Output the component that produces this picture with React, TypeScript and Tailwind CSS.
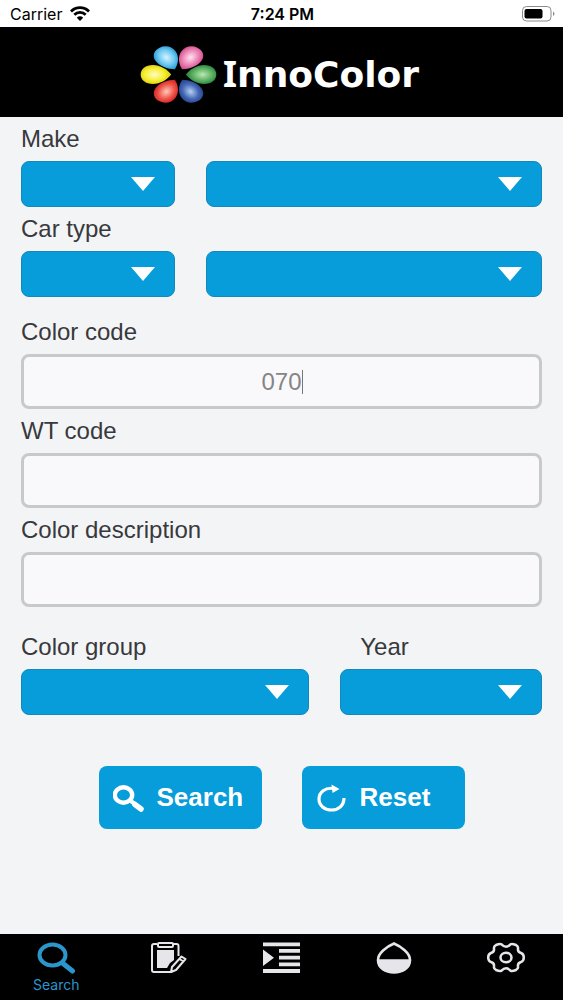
import { useState } from "react";

type SelectProps = {
  id: string;
  label?: string;
};

const petals = [
  { id: "yellow", angle: 0, light: "#fffbc4", mid: "#f6ef35", dark: "#d8c800" },
  { id: "cyan", angle: 60, light: "#d4f3ff", mid: "#6cc8f0", dark: "#1590cc" },
  { id: "pink", angle: 120, light: "#ffe3f1", mid: "#ec83b4", dark: "#c93f83" },
  { id: "green", angle: 180, light: "#b9e8b4", mid: "#5fb062", dark: "#157a37" },
  { id: "blue", angle: 240, light: "#b5d0f5", mid: "#4668b4", dark: "#1b3a86" },
  { id: "red", angle: 300, light: "#ffc9b8", mid: "#ee5348", dark: "#c8161d" },
];

const Flower = () => (
  <svg className="h-[60px] w-[78px]" viewBox="0 0 78 60" aria-hidden="true">
    <defs>
      {petals.map(({ id, light, mid, dark }) => (
        <radialGradient key={id} id={id} cx="0.45" cy="0.5" r="0.58">
          <stop offset="0" stopColor={light} />
          <stop offset="0.55" stopColor={mid} />
          <stop offset="1" stopColor={dark} />
        </radialGradient>
      ))}
    </defs>
    <g transform="translate(38.5 30.5) scale(1.22 1)">
      {petals.map(({ id, angle }) => (
        <path
          key={id}
          transform={`rotate(${angle})`}
          fill={`url(#${id})`}
          d="M-6 0C-9 -5 -15 -9.5 -21 -9.5C-27 -9.5 -31 -5.5 -31 0C-31 5.5 -27 9.5 -21 9.5C-15 9.5 -9 5 -6 0Z"
        />
      ))}
    </g>
  </svg>
);

const Select = ({ id, label }: SelectProps) => (
  <div className="relative">
    <select
      id={id}
      aria-label={label}
      className="block h-[46px] w-full appearance-none rounded-lg border border-[#1488bd] bg-[#079cda] pr-12 pl-4 text-2xl text-white"
    >
      <option value="" />
    </select>
    <svg
      className="pointer-events-none absolute top-4 right-5 h-[14px] w-6"
      viewBox="0 0 24 14"
      aria-hidden="true"
    >
      <path d="M0 0H24L12 14Z" fill="#fff" />
    </svg>
  </div>
);

const labelClass = "mb-2 block text-2xl leading-7";
const inputClass =
  "peer block h-[55px] w-full rounded-lg border-3 border-[#c8c9cb] bg-[#f9f9fb] text-center text-2xl text-[#858587] outline-none";
const buttonClass =
  "flex h-[63px] w-[163px] items-center gap-3 rounded-lg bg-[#079cda] pl-[14px]";

const StatusBar = () => (
  <div className="grid h-[27px] grid-cols-3 items-center bg-white pr-2 pl-[10px] font-['Inter',sans-serif] text-base text-black">
    <div className="flex items-center gap-2">
      <span>Carrier</span>
      <svg className="h-[15px] w-5" viewBox="0 0 20 15" aria-hidden="true">
        <g fill="none" stroke="#000" strokeWidth="2.8">
          <path d="M1 5.4C6 0.4 14 0.4 19 5.4" />
          <path d="M4.3 8.8C7.6 5.6 12.4 5.6 15.7 8.8" />
        </g>
        <path d="M10 15L6.8 11.7C8.6 9.9 11.4 9.9 13.2 11.7Z" />
      </svg>
    </div>
    <span className="text-center font-semibold">7:24 PM</span>
    <svg
      className="h-4 w-[33px] justify-self-end"
      viewBox="0 0 33 16"
      aria-hidden="true"
    >
      <rect x="0.5" y="0.5" width="28.5" height="14.5" rx="4" fill="none" stroke="#8b8b8b" />
      <rect x="2.5" y="3" width="18" height="9.5" rx="2" />
      <path d="M31 5.5C33 6.5 33 9 31 10Z" fill="#8b8b8b" />
    </svg>
  </div>
);

const tabs = [
  {
    name: "Search",
    icon: (
      <g fill="none" stroke="currentColor">
        <ellipse cx="15.5" cy="13" rx="13" ry="10.5" strokeWidth="4" />
        <path d="M26 21.5L35.5 29" strokeWidth="5" strokeLinecap="round" />
      </g>
    ),
  },
  {
    name: "Formulas",
    icon: (
      <g fill="none" stroke="currentColor" strokeWidth="2" strokeLinejoin="round">
        <path d="M8 2H5Q3 2 3 4V28Q3 30 5 30H22L23 29M29.5 14V4Q29.5 2 27.5 2H24" />
        <path d="M10 1H23Q24 1 24 2V4Q24 5 23 5H10Q9 5 9 4V2Q9 1 10 1Z" />
        <path
          d="M8 8H25V18L21 21L18 26H8Z"
          fill="currentColor"
          stroke="none"
        />
        <path d="M22 30L23 25L32.5 14.5L36.5 17L27 28ZM30.5 17L34.5 19.5" />
      </g>
    ),
  },
  {
    name: "List",
    icon: (
      <path
        fill="currentColor"
        d="M1 0.5H38V4.3H1ZM17 7H38V10.8H17ZM17 13.7H38V17.5H17ZM17 20.4H38V24.2H17ZM1 27H38V31H1ZM1 7.5L12 15.7L1 24Z"
      />
    ),
  },
  {
    name: "Tint",
    icon: (
      <g>
        <path
          d="M19 1.5C12 4.5 3 11 3 18C3 26 10.5 30.5 19 30.5C27.5 30.5 35 26 35 18C35 11 26 4.5 19 1.5Z"
          fill="none"
          stroke="currentColor"
          strokeWidth="2.6"
        />
        <path
          d="M3 17.3H35C35 26 27.5 30.5 19 30.5C10.5 30.5 3 26 3 17.3Z"
          fill="currentColor"
        />
      </g>
    ),
  },
  {
    name: "Settings",
    icon: (
      <g fill="none" stroke="currentColor" strokeWidth="2.5" strokeLinejoin="round">
        <path d="M14.5 2.3Q19 7 23.5 2.3Q25 1.3 29 3Q31.5 4.5 31 6.5Q30.5 10 34 11Q36.8 12 36.8 15.5Q36.8 19 34 20Q30.5 21 31 24.5Q31.5 26.5 29 28Q25 29.7 23.5 28.7Q19 24 14.5 28.7Q13 29.7 9 28Q6.5 26.5 7 24.5Q7.5 21 4 20Q1.2 19 1.2 15.5Q1.2 12 4 11Q7.5 10 7 6.5Q6.5 4.5 9 3Q13 1.3 14.5 2.3Z" />
        <ellipse cx="19" cy="15.5" rx="5.5" ry="4.8" />
      </g>
    ),
  },
];

const App = () => {
  const [colorCode, setColorCode] = useState<string>("070");
  const [activeTab, setActiveTab] = useState<string>("Search");

  return (
    <div className="flex min-h-screen flex-col bg-[#f3f4f6] font-['Liberation_Sans',Arial,sans-serif] text-[#38393c]">
      <StatusBar />
      <header className="flex h-[90px] items-center justify-center gap-[5px] bg-black pt-[3px] pr-1">
        <Flower />
        <h1 className="pt-[2px] font-['DejaVu_Sans',sans-serif] text-4xl leading-none font-bold text-white">
          <span className="font-['Noto_Sans',sans-serif]">I</span>nnoColor
        </h1>
      </header>

      <main className="flex-1 px-[21px] pt-2">
        <form
          onSubmit={(e) => e.preventDefault()}
          onReset={() => setColorCode("")}
        >
          <fieldset className="mb-2">
            <legend className={labelClass}>Make</legend>
            <div className="grid grid-cols-[11fr_24fr] gap-[31px]">
              <Select id="make-code" label="Make code" />
              <Select id="make-name" label="Make name" />
            </div>
          </fieldset>
          <fieldset className="mb-[21px]">
            <legend className={labelClass}>Car type</legend>
            <div className="grid grid-cols-[11fr_24fr] gap-[31px]">
              <Select id="car-type-code" label="Car type code" />
              <Select id="car-type-name" label="Car type name" />
            </div>
          </fieldset>

          <div className="mb-2">
            <label htmlFor="color-code" className={labelClass}>
              Color code
            </label>
            <div className="relative">
              <input
                id="color-code"
                type="text"
                className={inputClass}
                value={colorCode}
                onChange={({ target }) => setColorCode(target.value)}
              />
              {colorCode ? (
                <span className="absolute top-4 left-1/2 ml-5 h-6 w-px bg-[#77777a] peer-focus:hidden" />
              ) : null}
            </div>
          </div>
          <div className="mb-2">
            <label htmlFor="wt-code" className={labelClass}>
              WT code
            </label>
            <input id="wt-code" type="text" className={inputClass} />
          </div>
          <div className="mb-[26px]">
            <label htmlFor="color-description" className={labelClass}>
              Color description
            </label>
            <input id="color-description" type="text" className={inputClass} />
          </div>

          <div className="grid grid-cols-[10fr_7fr] gap-[31px]">
            <div>
              <label htmlFor="color-group" className={labelClass}>
                Color group
              </label>
              <Select id="color-group" />
            </div>
            <div>
              <label htmlFor="year" className={`${labelClass} pl-5`}>
                Year
              </label>
              <Select id="year" />
            </div>
          </div>

          <div className="my-[51px] flex justify-center gap-10 text-[26px] font-bold text-white">
            <button type="submit" className={buttonClass}>
              <svg className="h-7 w-8" viewBox="0 0 32 28" aria-hidden="true">
                <ellipse cx="10.5" cy="11" rx="8.7" ry="7.7" fill="none" stroke="#fff" strokeWidth="4.4" />
                <path d="M17 16.5L22 20" stroke="#fff" strokeWidth="4" />
                <path d="M22 20.500L28 25" stroke="#fff" strokeWidth="5.5" strokeLinecap="round" />
              </svg>
              Search
            </button>
            <button type="reset" className={buttonClass}>
              <svg className="h-7 w-8" viewBox="0 0 32 28" aria-hidden="true">
                <path
                  d="M18 4.5C9 3 3 8.5 3 15C3 21.5 8.5 26 15.5 26C22.5 26 28 21.5 28 14"
                  fill="none"
                  stroke="#fff"
                  strokeWidth="3.2"
                />
                <path d="M15.5 0.5L23.5 5L16.5 9Z" fill="#fff" />
              </svg>
              Reset
            </button>
          </div>
        </form>
      </main>

      <nav className="grid h-[66px] grid-cols-5 bg-black font-['Inter',sans-serif]">
        {tabs.map(({ name, icon }) => (
          <button
            key={name}
            type="button"
            aria-label={name}
            onClick={() => setActiveTab(name)}
            className={
              activeTab === name
                ? "flex flex-col items-center pt-2 text-[#2a96cc]"
                : "flex flex-col items-center pt-2 text-[#e6e6ea]"
            }
          >
            <svg className="h-8 w-[39px]" viewBox="0 0 39 32" aria-hidden="true">
              {icon}
            </svg>
            {activeTab === name ? (
              <span className="text-sm leading-[22px]">{name}</span>
            ) : null}
          </button>
        ))}
      </nav>
    </div>
  );
};

export default App;
